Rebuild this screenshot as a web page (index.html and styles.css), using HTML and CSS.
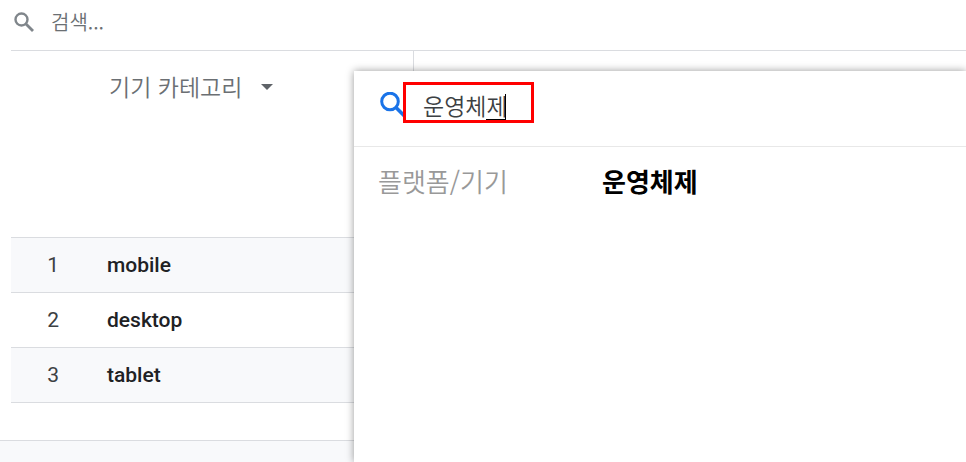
FILE: index.html
```html
<!DOCTYPE html>
<html lang="ko">
<head>
  <meta charset="utf-8">
  <meta name="viewport" content="width=device-width, initial-scale=1">
  <title>기기 카테고리</title>
  <link rel="stylesheet" href="styles.css">
</head>
<body>
  <main class="report">
    <div class="search-bar">
      <svg class="search-icon" viewBox="0 0 20 20" aria-hidden="true">
        <circle cx="7.5" cy="7.5" r="6" fill="none" stroke="currentColor" stroke-width="2.4"/>
        <path d="M12 12L19 19" stroke="currentColor" stroke-width="2.8"/>
      </svg>
      <input class="search-input" type="text" placeholder="검색..." aria-label="검색">
    </div>

    <table class="data-table">
      <thead>
        <tr>
          <th class="col-index"></th>
          <th class="col-name">
            <button class="dimension" type="button">
              기기 카테고리
              <svg class="arrow" viewBox="0 0 12 6" aria-hidden="true"><path d="M0 0H12L6 6Z" fill="currentColor"/></svg>
            </button>
          </th>
          <th></th>
        </tr>
      </thead>
      <tbody>
        <tr><td class="index">1</td><td class="name">mobile</td><td></td></tr>
        <tr><td class="index">2</td><td class="name">desktop</td><td></td></tr>
        <tr><td class="index">3</td><td class="name">tablet</td><td></td></tr>
      </tbody>
    </table>
  </main>
  <footer class="footer"></footer>

  <section class="picker">
    <div class="picker-search">
      <svg class="picker-icon" viewBox="0 0 25 25" aria-hidden="true">
        <circle cx="10" cy="9.5" r="8.3" fill="none" stroke="currentColor" stroke-width="3"/>
        <path d="M15.5 15L25 24.5" stroke="currentColor" stroke-width="3.6"/>
      </svg>
      <input class="picker-input" type="text" value="운영체제" aria-label="항목 검색">
      <span class="composing"></span>
      <span class="highlight"></span>
    </div>
    <div class="picker-row">
      <span class="picker-group">플랫폼/기기</span>
      <button class="picker-item" type="button">운영체제</button>
    </div>
  </section>
</body>
</html>
```
FILE: styles.css
```css
* {
  box-sizing: border-box;
}

body {
  margin: 0;
  min-height: 100vh;
  display: flex;
  flex-direction: column;
  position: relative;
  overflow: hidden;
  background: #fff;
  color: #202124;
  font-family: Roboto, "Noto Sans CJK KR", sans-serif;
}

input,
button {
  padding: 0;
  border: none;
  outline: none;
  background: none;
  font-family: "Noto Sans CJK KR", sans-serif;
}

.report {
  padding-left: 11px;
}

/* search above the table */
.search-bar {
  display: flex;
  align-items: center;
  gap: 17px;
  height: 51px;
  padding: 0 3px 8px;
  border-bottom: 1px solid #dadce0;
}

.search-icon {
  width: 20px;
  height: 20px;
  margin-top: 2px;
  color: #80868b;
}

.search-input {
  flex: 1;
  height: 32px;
  font-size: 20px;
  font-weight: 350;
}

.search-input::placeholder {
  color: #6b6f73;
  opacity: 1;
}

/* table */
.data-table {
  width: 100%;
  table-layout: fixed;
  border-collapse: separate;
  border-spacing: 0;
}

.data-table th {
  height: 187px;
  padding: 19px 0 0;
  vertical-align: top;
  text-align: left;
  border-bottom: 1px solid #dadce0;
}

.col-index {
  width: 73px;
}

.data-table .col-name {
  width: 330px;
  padding-left: 25px;
  border-right: 1px solid #dadce0;
}

.dimension {
  display: flex;
  align-items: center;
  gap: 19px;
  height: 32px;
  color: #6b6f73;
  font-size: 23px;
  font-weight: 350;
}

.arrow {
  width: 12px;
  height: 6px;
  margin-top: 2px;
  color: #5f6368;
}

.data-table td {
  height: 55px;
  padding: 0;
  font-size: 21px;
  border-bottom: 1px solid #dadce0;
}

.data-table tbody tr:nth-child(odd) {
  background: #f8f9fb;
}

.data-table .index {
  padding-right: 25px;
  text-align: right;
  color: #3c4043;
}

.data-table .name {
  padding-left: 23px;
  font-weight: 500;
}

.footer {
  flex: 1;
  margin-top: 37px;
  background: #f8f9fb;
  border-top: 1px solid #dadce0;
}

/* dimension picker over the table */
.picker {
  position: absolute;
  top: 71px;
  right: 0;
  bottom: 0;
  left: 354px;
  background: #fff;
  box-shadow: 0 0 8px rgba(0, 0, 0, 0.4);
}

.picker-search {
  position: relative;
  display: flex;
  align-items: center;
  gap: 18px;
  height: 76px;
  padding: 0 26px 8px;
  border-bottom: 1px solid #e8e8e8;
}

.picker-icon {
  width: 25px;
  height: 25px;
  color: #1a73e8;
}

.picker-input {
  flex: 1;
  height: 32px;
  color: #3c4043;
  font-size: 23px;
  font-weight: 350;
}

/* underline and caret of the syllable being typed */
.composing {
  position: absolute;
  top: 23px;
  left: 132px;
  width: 20px;
  height: 26px;
  border-right: 1px solid #000;
  border-bottom: 1px solid #000;
}

.highlight {
  position: absolute;
  top: 11px;
  left: 49px;
  width: 131px;
  height: 41px;
  border: 3px solid #f00;
}

.picker-row {
  display: flex;
  align-items: center;
  padding: 14px 24px;
  font-size: 26px;
  line-height: 40px;
}

.picker-group {
  width: 224px;
  color: #999;
  font-family: "Noto Sans CJK KR", sans-serif;
  font-weight: 350;
}

.picker-item {
  color: #000;
  font-size: 26px;
  font-weight: 700;
  line-height: 40px;
}
```
